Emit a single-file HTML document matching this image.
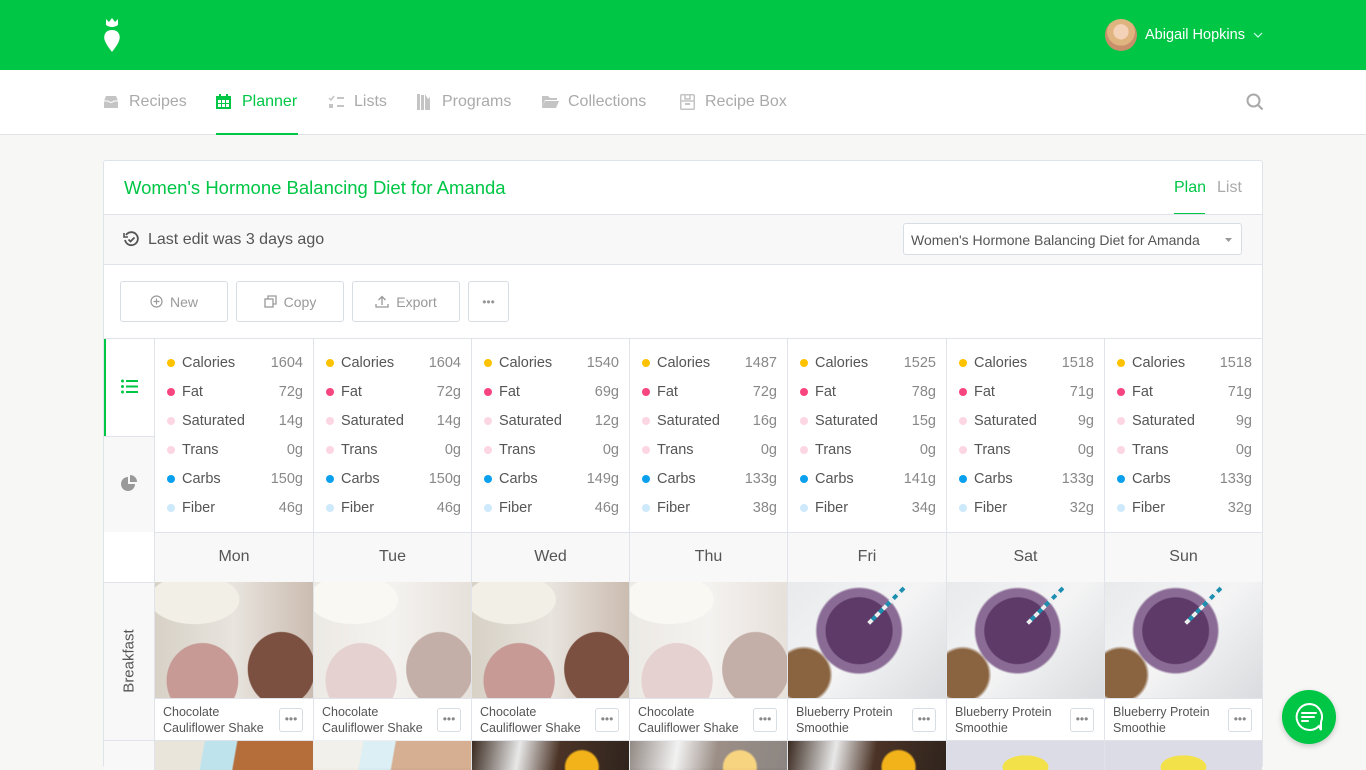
<!DOCTYPE html>
<html><head><meta charset="utf-8">
<style>
*{margin:0;padding:0;box-sizing:border-box}
body{width:1366px;height:768px;overflow:hidden;background:#f7f7f6;font-family:"Liberation Sans",sans-serif;position:relative;color:#555}
.a{position:absolute}
.top{left:0;top:0;width:1366px;height:70px;background:#00c646}
.nav{left:0;top:70px;width:1366px;height:65px;background:#fff;border-bottom:1px solid #e2e2e2}
.ni{top:93px;font-size:16px;color:#aaa}
.card{left:103px;top:160px;width:1160px;height:608px;background:#fff;border:1px solid #dfe3ea;border-bottom:none;border-radius:3px;overflow:hidden}
.btn{top:281px;height:41px;border:1px solid #d8dce3;border-radius:3px;font-size:14px;color:#999;display:flex;align-items:center;justify-content:center;gap:7px;background:#fff}
.col{top:339px;height:193px;border-left:1px solid #e0e4ea}
.r{position:absolute;left:10px;right:10px;height:20px;line-height:20px;font-size:14.5px;color:#555}
.r i{position:absolute;left:2px;top:6px;width:8px;height:8px;border-radius:50%}
.r span{position:absolute;left:17px}
.r b{position:absolute;right:0;font-weight:normal;color:#888}
.day{top:532px;height:50px;border-left:1px solid #e0e4ea;border-top:1px solid #e0e4ea;background:#f8f8f8;text-align:center;line-height:48px;font-size:16px;color:#555}
.img{top:582px;height:116px;border-left:1px solid #e0e4ea;overflow:hidden}
.cap{top:698px;height:42px;border-left:1px solid #e0e4ea;border-top:1px solid #e0e4ea;background:#fff;font-size:12.5px;line-height:16px;padding:5px 0 0 8px;color:#555}
.dots{position:absolute;right:10px;top:9px;width:24px;height:24px;border:1px solid #d8dce3;border-radius:3px;text-align:center;font-size:12px;line-height:20px;color:#888}
.img2{top:740px;height:30px;border-left:1px solid #e0e4ea;border-top:1px solid #e0e4ea;overflow:hidden}
</style></head><body>
<div class="a top"></div>
<svg class="a" style="left:102px;top:17px" width="20" height="36" viewBox="0 0 20 36"><path d="M4 2 L7 5 L10 1 L13 5 L16 2 L16 8 Q10 12 4 8 Z" fill="#fff"/><path d="M10 13 C3 13 1 19 3 24 C5 29 8 32 10 35 C12 32 15 29 17 24 C19 19 17 13 10 13Z" fill="#fff"/></svg>
<div class="a" style="left:1105px;top:19px;width:32px;height:32px;border-radius:50%;background:radial-gradient(circle at 50% 40%,#f3d2b8 0 30%,#e0b47f 31% 55%,#c98f6a 56%);"></div>
<div class="a" style="left:1145px;top:27px;color:#fff;font-size:14.5px">Abigail Hopkins</div>
<svg class="a" style="left:1253px;top:32px" width="10" height="6"><path d="M1 1 L5 5 L9 1" stroke="#cfe" fill="none" stroke-width="1.2"/></svg>

<div class="a nav"></div>
<svg class="a" style="left:103px;top:95px" width="16" height="14"><path d="M1 6 L3 1 H13 L15 6 V13 H1 Z" fill="#c4c4c4"/><path d="M1 6 H5 Q8 9 11 6 H15" stroke="#fff" fill="none"/></svg>
<div class="a ni" style="left:129px">Recipes</div>
<svg class="a" style="left:216px;top:94px" width="15" height="15"><rect x="0" y="2" width="15" height="13" fill="#00c646"/><rect x="3" y="0" width="2" height="4" fill="#00c646"/><rect x="10" y="0" width="2" height="4" fill="#00c646"/><g fill="#fff"><rect x="2" y="6" width="3" height="3"/><rect x="6" y="6" width="3" height="3"/><rect x="10" y="6" width="3" height="3"/><rect x="2" y="10" width="3" height="3"/><rect x="6" y="10" width="3" height="3"/><rect x="10" y="10" width="3" height="3"/></g></svg>
<div class="a ni" style="left:242px;color:#00c646">Planner</div>
<div class="a" style="left:216px;top:133px;width:82px;height:2px;background:#00c646"></div>
<svg class="a" style="left:328px;top:95px" width="17" height="14"><path d="M1 3 L3 5 L6 1" stroke="#c4c4c4" fill="none" stroke-width="1.5"/><rect x="9" y="2" width="7" height="2" fill="#c4c4c4"/><rect x="1" y="9" width="4" height="4" fill="#c4c4c4"/><rect x="9" y="10" width="7" height="2" fill="#c4c4c4"/></svg>
<div class="a ni" style="left:354px">Lists</div>
<svg class="a" style="left:417px;top:94px" width="14" height="16"><rect x="0" y="0" width="3" height="16" fill="#c4c4c4"/><rect x="4" y="1" width="3" height="15" fill="#c4c4c4"/><path d="M8 0 V16 H13 V3 L11 5 Z" fill="#c4c4c4"/></svg>
<div class="a ni" style="left:442px">Programs</div>
<svg class="a" style="left:542px;top:95px" width="17" height="14"><path d="M0 1 H6 L8 3 H15 V5 H3 L0 13Z" fill="#c4c4c4"/><path d="M3 6 H17 L14 13 H0Z" fill="#c4c4c4"/></svg>
<div class="a ni" style="left:568px">Collections</div>
<svg class="a" style="left:680px;top:94px" width="15" height="16"><rect x="0.75" y="0.75" width="13.5" height="14.5" rx="1" stroke="#c4c4c4" stroke-width="1.5" fill="none"/><path d="M1 7 H14" stroke="#c4c4c4" stroke-width="1.5"/><rect x="5" y="9" width="5" height="2" fill="#c4c4c4"/><path d="M5 1 V5 H10 V1" stroke="#c4c4c4" fill="none" stroke-width="1.5"/></svg>
<div class="a ni" style="left:705px">Recipe Box</div>
<svg class="a" style="left:1246px;top:93px" width="18" height="18"><circle cx="7.5" cy="7.5" r="6" stroke="#aaa" stroke-width="2" fill="none"/><path d="M12 12 L16.5 16.5" stroke="#aaa" stroke-width="2.2"/></svg>

<div class="a card"></div>
<div class="a" style="left:124px;top:177px;font-size:18.5px;color:#00c646">Women's Hormone Balancing Diet for Amanda</div>
<div class="a" style="left:1174px;top:179px;font-size:16px;color:#00c646">Plan</div>
<div class="a" style="left:1174px;top:213px;width:31px;height:2px;background:#00c646"></div>
<div class="a" style="left:1217px;top:179px;font-size:16px;color:#aaa">List</div>
<div class="a" style="left:104px;top:214px;width:1158px;height:51px;background:#f8f8f8;border-top:1px solid #e0e4ea;border-bottom:1px solid #e0e4ea"></div>
<svg class="a" style="left:123px;top:231px" width="17" height="17" viewBox="0 0 17 17"><path d="M3 4 A6.5 6.5 0 1 1 2 9" stroke="#555" stroke-width="1.8" fill="none"/><path d="M1 2 V6 H5" stroke="#555" stroke-width="1.6" fill="none"/><path d="M5.5 8.5 L7.5 10.5 L11.5 6.5" stroke="#555" stroke-width="1.8" fill="none"/></svg>
<div class="a" style="left:148px;top:231px;font-size:16px;color:#555">Last edit was 3 days ago</div>
<div class="a" style="left:903px;top:223px;width:339px;height:32px;background:#fff;border:1px solid #d8dce3;border-radius:3px;font-size:14px;color:#555;padding:8px 0 0 7px">Women's Hormone Balancing Diet for Amanda</div>
<svg class="a" style="left:1225px;top:238px" width="7" height="4"><path d="M0 0 H7 L3.5 4Z" fill="#999"/></svg>

<div class="a btn" style="left:120px;width:108px"><svg width="13" height="13"><circle cx="6.5" cy="6.5" r="5.5" stroke="#999" fill="none" stroke-width="1.2"/><path d="M6.5 3.5 V9.5 M3.5 6.5 H9.5" stroke="#999" stroke-width="1.2"/></svg>New</div>
<div class="a btn" style="left:236px;width:108px"><svg width="13" height="13"><rect x="1" y="4" width="8" height="8" stroke="#999" fill="none" stroke-width="1.3"/><path d="M4 4 V1 H12 V9 H9" stroke="#999" fill="none" stroke-width="1.3"/></svg>Copy</div>
<div class="a btn" style="left:352px;width:108px"><svg width="14" height="13"><path d="M7 10 V2 M3.5 5 L7 1.5 L10.5 5 M1 9 V12 H13 V9" stroke="#999" fill="none" stroke-width="1.3"/></svg>Export</div>
<div class="a btn" style="left:468px;width:41px;font-size:12px">•••</div>

<div class="a" style="left:104px;top:338px;width:1158px;height:1px;background:#e0e4ea"></div>
<div class="a" style="left:104px;top:339px;width:50px;height:97px;background:#fff;border-left:2px solid #00c646"></div>
<svg class="a" style="left:121px;top:379px" width="17" height="15"><g fill="#00c646"><circle cx="1.5" cy="2" r="1.5"/><circle cx="1.5" cy="7.5" r="1.5"/><circle cx="1.5" cy="13" r="1.5"/><rect x="5" y="1" width="12" height="2"/><rect x="5" y="6.5" width="12" height="2"/><rect x="5" y="12" width="12" height="2"/></g></svg>
<div class="a" style="left:104px;top:436px;width:50px;height:96px;background:#f8f8f8;border-top:1px solid #e0e4ea"></div>
<svg class="a" style="left:121px;top:475px" width="16" height="16"><path d="M7 2 A7 7 0 1 0 14 9 H7Z" fill="#999"/><path d="M9 0 A7 7 0 0 1 16 7 H9Z" fill="#999"/></svg>
<div class="a" style="left:104px;top:582px;width:50px;height:158px;background:#f8f8f8;border-top:1px solid #e0e4ea"></div>
<div class="a" style="left:129px;top:661px;transform:translate(-50%,-50%) rotate(-90deg);font-size:15px;color:#555;white-space:nowrap">Breakfast</div>
<div class="a" style="left:104px;top:740px;width:50px;height:30px;background:#f8f8f8;border-top:1px solid #e0e4ea"></div>

<div id="g"></div>
<script>
var xs=[154,313,471,629,787,946,1104,1262];
var days=["Mon","Tue","Wed","Thu","Fri","Sat","Sun"];
var d=[["1604","72g","14g","0g","150g","46g"],["1604","72g","14g","0g","150g","46g"],["1540","69g","12g","0g","149g","46g"],["1487","72g","16g","0g","133g","38g"],["1525","78g","15g","0g","141g","34g"],["1518","71g","9g","0g","133g","32g"],["1518","71g","9g","0g","133g","32g"]];
var n=["Calories","Fat","Saturated","Trans","Carbs","Fiber"];
var c=["#ffc200","#f9457f","#fcd6e2","#fcd6e2","#0aa0ee","#cde9fb"];
var h="";
var choc='background:radial-gradient(ellipse 30% 45% at 80% 75%,#7c5040 0 70%,transparent 72%),radial-gradient(ellipse 28% 40% at 30% 85%,#c79a96 0 80%,transparent 82%),radial-gradient(ellipse 40% 30% at 25% 15%,#f2f0e6 0 70%,transparent 72%),linear-gradient(90deg,#d7d1c6,#e8e4de 50%,#cbbcb0)';
var blue='background:radial-gradient(circle at 45% 42%,#5e3a68 0 30%,#8a6b95 31% 38%,transparent 40%),radial-gradient(circle at 10% 80%,#8a6440 0 15%,transparent 17%),linear-gradient(135deg,#e8eaec,#f4f4f5 50%,#d9dbde)';
for(var i=0;i<7;i++){var x=xs[i],w=xs[i+1]-x;
h+='<div class="a col" style="left:'+x+'px;width:'+w+'px">';
for(var j=0;j<6;j++)h+='<div class="r" style="top:'+(14+j*29)+'px"><i style="background:'+c[j]+'"></i><span>'+n[j]+'</span><b>'+d[i][j]+'</b></div>';
h+='</div>';
h+='<div class="a day" style="left:'+x+'px;width:'+w+'px">'+days[i]+'</div>';
var bg=i<4?choc:blue,op=(i==1||i==3)?'opacity:.45;':'';
h+='<div class="a img" style="left:'+x+'px;width:'+w+'px;background:#fff"><div style="width:100%;height:100%;'+bg+';'+op+'"></div>'+(i>=4?'<div style="position:absolute;left:'+(w*0.72)+'px;top:6px;width:4px;height:50px;background:repeating-linear-gradient(#1e8fb0 0 5px,#eee 5px 10px);transform:rotate(45deg);transform-origin:top"></div>':'')+'</div>';
var t=i<4?'Chocolate<br>Cauliflower Shake':'Blueberry Protein<br>Smoothie';
h+='<div class="a cap" style="left:'+x+'px;width:'+w+'px">'+t+'<div class="dots">•••</div></div>';
var b2=i<2?'linear-gradient(100deg,#e9e5da 0 30%,#bfe3ec 31% 50%,#b56d3a 51%)':(i<5?'radial-gradient(circle at 70% 90%,#f2b21a 0 14%,transparent 16%),linear-gradient(100deg,#3a2a20,#e8e8e8 30%,#4b3326 55%,#2f241d)':'radial-gradient(ellipse 18% 50% at 50% 90%,#f3e14a 0 80%,transparent 82%),#dcdce6');
h+='<div class="a img2" style="left:'+x+'px;width:'+w+'px;background:'+b2+';'+(i==1||i==3?'opacity:.55':'')+'"></div>';
}
document.getElementById('g').innerHTML=h;
</script>
<div class="a" style="left:1282px;top:690px;width:54px;height:54px;border-radius:50%;background:#00c646;box-shadow:0 2px 6px rgba(0,0,0,.2)"></div>
<svg class="a" style="left:1293px;top:701px" width="32" height="32" viewBox="0 0 32 32"><path d="M16 3 A13 13 0 1 0 26 25 L28 29 L28 21 A13 13 0 0 0 16 3Z" stroke="#fff" stroke-width="2" fill="none"/><path d="M9 12 H23 M9 16 H21 M9 20 H15" stroke="#fff" stroke-width="2" stroke-linecap="round"/></svg>
</body></html>
